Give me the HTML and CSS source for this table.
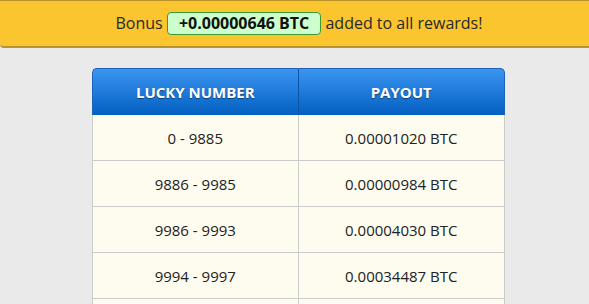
FILE: index.html
```html
<!DOCTYPE html>
<html>
<head>
<meta charset="utf-8">
<link rel="stylesheet" href="styles.css">
</head>
<body>
<div class="banner">
  <span class="banner-text">Bonus <span class="badge">+0.00000646 BTC</span> added to all rewards!</span>
</div>
<div class="content">
  <table class="payout-table">
    <thead>
      <tr><th>LUCKY NUMBER</th><th>PAYOUT</th></tr>
    </thead>
    <tbody>
      <tr><td>0 - 9885</td><td>0.00001020 BTC</td></tr>
      <tr><td>9886 - 9985</td><td>0.00000984 BTC</td></tr>
      <tr><td>9986 - 9993</td><td>0.00004030 BTC</td></tr>
      <tr><td>9994 - 9997</td><td>0.00034487 BTC</td></tr>
      <tr><td></td><td></td></tr>
    </tbody>
  </table>
</div>
</body>
</html>
```

FILE: styles.css
```css
html, body {
  margin: 0;
  padding: 0;
}
body {
  background: #eaeaea;
  font-family: "Open Sans", "DejaVu Sans", sans-serif;
  color: #222;
  overflow: hidden;
}
.banner {
  height: 45px;
  background: #fbc52f;
  border-top: 1px solid #b99228;
  border-bottom: 2px solid #b99228;
  border-bottom-left-radius: 4px;
  display: flex;
  align-items: center;
  justify-content: center;
  padding-left: 9px;
  font-size: 16px;
  color: #2a2a2a;
}
.banner-text {
  line-height: 23px;
}
.badge {
  display: inline-block;
  padding: 0 11px;
  line-height: 21px;
  background: #ccffcc;
  border: 1px solid #3a9a34;
  border-radius: 4px;
  font-weight: 700;
  color: #111;
  vertical-align: top;
}
.content {
  display: flex;
  justify-content: center;
  padding-left: 8px;
  padding-top: 20px;
}
.payout-table {
  border-collapse: separate;
  border-spacing: 0;
  width: 413px;
  table-layout: fixed;
  font-size: 15px;
}
.payout-table th {
  height: 46px;
  padding: 0;
  color: #fff;
  font-weight: 700;
  text-shadow: 0 1px 1px rgba(0, 0, 0, 0.45);
  background: linear-gradient(#3b94f1, #0360c1);
  border-top: 1px solid #1a63b6;
  border-right: 1px solid #0b54a6;
}
.payout-table th:first-child {
  border-left: 1px solid #1a63b6;
  border-top-left-radius: 5px;
}
.payout-table th:last-child {
  border-right: 1px solid #1a63b6;
  border-top-right-radius: 5px;
}
.payout-table td {
  height: 45px;
  padding: 0;
  text-align: center;
  background: #fdfcef;
  border-bottom: 1px solid #cccccc;
  border-right: 1px solid #cccccc;
  color: #222;
}
.payout-table td:first-child {
  border-left: 1px solid #cccccc;
}
```
